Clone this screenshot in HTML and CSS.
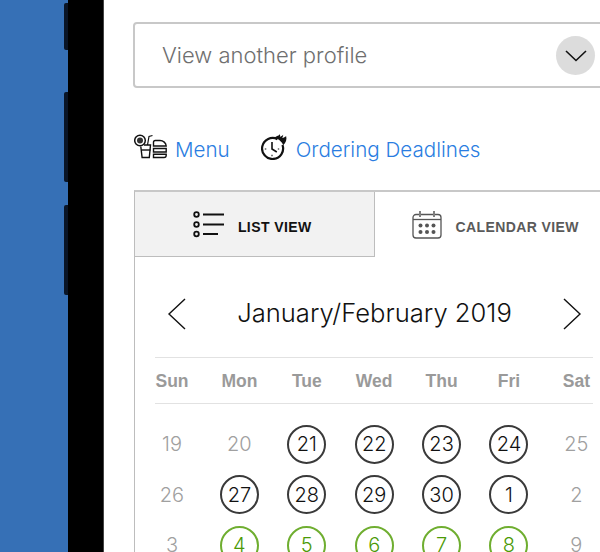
FILE: index.html
```html
<!DOCTYPE html>
<html lang="en">
<head>
<meta charset="utf-8">
<title>Profile calendar</title>
<link rel="stylesheet" href="styles.css">
</head>
<body>
<div class="device">
  <div class="backdrop"></div>
  <div class="bezel">
    <span class="key key-a"></span>
    <span class="key key-b"></span>
    <span class="key key-c"></span>
  </div>
  <main class="screen">
    <div class="select">
      <span class="select-label">View another profile</span>
      <span class="select-btn">
        <svg width="24" height="13" viewBox="0 0 24 13"><path d="M2 2l10 9.500L22 2" fill="none" stroke="#111" stroke-width="1.600"/></svg>
      </span>
    </div>
    <nav class="links">
      <a class="link">
        <svg class="menu-icon" width="33" height="25" viewBox="0 0 33 25" fill="none" stroke="#111" stroke-width="1.400">
          <circle cx="6" cy="6.500" r="5.300" stroke-width="1.500"/><circle cx="6" cy="6.500" r="3" fill="#333" stroke="none"/>
          <path d="M6.800 12.500l1.300 11h7.200l1.200-12.500H10"/><path d="M7.500 16h9"/><path d="M13.500 11l1.500-8.500 3.500-1" stroke-width="1.200"/>
          <path d="M19.500 12V8.300c0-1 .7-1.800 1.800-1.800h4.700c3.300 0 6 2.500 6.200 5.500z"/><path d="M19.500 14.500h12.700v3.500H19.500z"/><path d="M19.500 20.300h12.700v1c0 1.300-1 2.200-2.200 2.200H19.500z"/>
        </svg>
        <span>Menu</span>
      </a>
      <a class="link">
        <svg class="clock-icon" width="27" height="26" viewBox="0 0 27 26" fill="none" stroke="#111">
          <path d="M16.500 5.200A10.500 10.500 0 1 0 21.500 11" stroke-width="2.200"/>
          <path d="M11 8v7l4.800 3" stroke-width="1.600"/>
          <path d="M3.800 15h1.500M11 22.300v-1.500M16.800 15h1.400" stroke-width="1.100"/>
          <path d="M13.500 3.800c1.500-2 3.800-1.400 5.300-3.600.5 1 .4 1.900 0 2.600 1.400-.2 2.600-.9 3.300-2 .1 1.300-.3 2.200-1 2.900 1.500.1 3-.6 4-1.800 1 3.200-.2 7-3 9.300-.6-3-5.200-6.700-8.600-7.400z" fill="#111" stroke="none"/>
        </svg>
        <span>Ordering Deadlines</span>
      </a>
    </nav>
    <section class="panel">
      <div class="tabs">
        <div class="tab tab-active">
          <svg width="32" height="27" viewBox="0 0 32 27" fill="none" stroke="#111">
            <circle cx="3.500" cy="3.500" r="2.300" stroke-width="1.800"/><circle cx="3.500" cy="13.500" r="2.300" stroke-width="1.800"/><circle cx="3.500" cy="23" r="2.300" stroke-width="1.800"/>
            <path d="M10 3.500h21M10 13.500h21M10 23h15" stroke-width="2"/>
          </svg>
          <span>LIST VIEW</span>
        </div>
        <div class="tab tab-idle">
          <svg width="30" height="29" viewBox="0 0 30 29" fill="none" stroke="#555">
            <path d="M7 4.500H4a3 3 0 0 0-3 3V25a3 3 0 0 0 3 3h22a3 3 0 0 0 3-3V7.500a3 3 0 0 0-3-3h-3M9 4.500h12" stroke-width="1.300"/>
            <path d="M8 1v6M22 1v6" stroke-width="1.500"/><path d="M1 9.500h28" stroke-width="1.300"/>
            <g fill="#555" stroke="none"><circle cx="8.500" cy="15.500" r="2"/><circle cx="15" cy="15.500" r="2"/><circle cx="21.500" cy="15.500" r="2"/><circle cx="8.500" cy="22" r="2"/><circle cx="15" cy="22" r="2"/><circle cx="21.500" cy="22" r="2"/></g>
          </svg>
          <span>CALENDAR VIEW</span>
        </div>
      </div>
      <div class="calendar">
        <div class="cal-head">
          <svg width="20" height="32" viewBox="0 0 20 32"><path d="M19 1L3 16l16 15" fill="none" stroke="#111" stroke-width="1.400"/></svg>
          <h2 class="cal-title">January/February 2019</h2>
          <svg width="20" height="32" viewBox="0 0 20 32"><path d="M1 1l16 15L1 31" fill="none" stroke="#111" stroke-width="1.400"/></svg>
        </div>
        <div class="week-row">
          <div class="grid week">
            <span>Sun</span><span>Mon</span><span>Tue</span><span>Wed</span><span>Thu</span><span>Fri</span><span>Sat</span>
          </div>
        </div>
        <div class="grid days">
          <span class="day off">19</span><span class="day off">20</span><span class="day on">21</span><span class="day on">22</span><span class="day on">23</span><span class="day on">24</span><span class="day off">25</span>
          <span class="day off">26</span><span class="day on">27</span><span class="day on">28</span><span class="day on">29</span><span class="day on">30</span><span class="day on">1</span><span class="day off">2</span>
          <span class="day off">3</span><span class="day open">4</span><span class="day open">5</span><span class="day open">6</span><span class="day open">7</span><span class="day open">8</span><span class="day off">9</span>
        </div>
      </div>
    </section>
  </main>
</div>
</body>
</html>
```
FILE: styles.css
```css
* { box-sizing: border-box; }
html, body { margin: 0; height: 100%; overflow: hidden; background: #fff; }
body { font-family: "Inter", "Liberation Sans", sans-serif; }

.device { display: flex; width: 600px; height: 552px; overflow: hidden; }
.backdrop { flex: 0 0 68px; background: #3670b6; }
.bezel { flex: 0 0 36px; background: #000; position: relative; border-right: 1px solid #444; }
.key { position: absolute; left: -4px; width: 4px; background: #0a1526; border-radius: 2px 0 0 2px; }
.key-a { top: 3px; height: 47px; }
.key-b { top: 92px; height: 90px; }
.key-c { top: 205px; height: 90px; }

.screen { flex: 0 0 auto; width: 530px; padding: 22px 0 0 29px; }

.select {
  width: 480px; height: 66px; display: flex; align-items: center; justify-content: space-between;
  border: 2px solid #c8c8c8; border-radius: 4px; padding: 0 16px 0 27px; background: #fff;
}
.select-label { font-size: 22px; font-weight: 300; color: #6f6f6f; }
.select-btn {
  width: 39px; height: 39px; border-radius: 50%; background: #dcdcdc;
  display: flex; align-items: center; justify-content: center;
}

.links { display: flex; align-items: center; gap: 31px; margin: 47px 0 0 1px; height: 28px; }
.link { display: flex; align-items: center; font-size: 20.600px; font-weight: 300; color: #2a7de1; }
.menu-icon { margin-right: 8px; margin-top: -5px; }
.clock-icon { margin-right: 8px; margin-top: -5px; }

.panel { margin: 27px 0 0 1px; width: 480px; height: 370px; border-left: 1px solid #bdbdbd; border-top: 2px solid #c8c8c8; }
.tabs { display: flex; height: 65px; }
.tab { display: flex; align-items: center; justify-content: center; padding-top: 5px; font-size: 14px; font-weight: 700; font-family: "Liberation Sans", sans-serif; letter-spacing: .4px; }
.tab svg { margin-top: -5px; }
.tab-active { width: 241px; background: #f2f2f2; color: #111; gap: 13px; border-right: 1px solid #bdbdbd; border-bottom: 1px solid #bdbdbd; padding-right: 5px; }
.tab-idle { width: 239px; color: #5a5a5a; gap: 13px; justify-content: flex-start; padding-left: 37px; }

.calendar { width: 458px; padding: 0 0 0 20px; }
.cal-head { display: flex; align-items: center; justify-content: space-between; height: 101px; padding: 13px 10px 0 11px; border-bottom: 1px solid #e2e2e2; }
.cal-title { margin: -2px 0 0; font-size: 25.600px; font-weight: 300; color: #111; }

.grid { display: grid; grid-template-columns: repeat(7, 67.400px); margin-left: -16.700px; justify-items: center; }
.week-row { height: 46px; border-bottom: 1px solid #e2e2e2; }
.week { height: 46px; padding-top: 1px; align-items: center; font-size: 17.500px; font-weight: 700; color: #9a9a9a; font-family: "Liberation Sans", sans-serif; }
.days { grid-auto-rows: 50.500px; padding-top: 15px; align-items: center; font-size: 20px; font-weight: 300; }
.day { width: 39px; height: 39px; display: flex; align-items: center; justify-content: center; border-radius: 50%; }
.off { color: #a0a0a0; }
.on { border: 2px solid #3a3a3a; color: #111; font-weight: 350; }
.open { border: 2px solid #6fae30; color: #4b9a06; font-weight: 350; }
```
